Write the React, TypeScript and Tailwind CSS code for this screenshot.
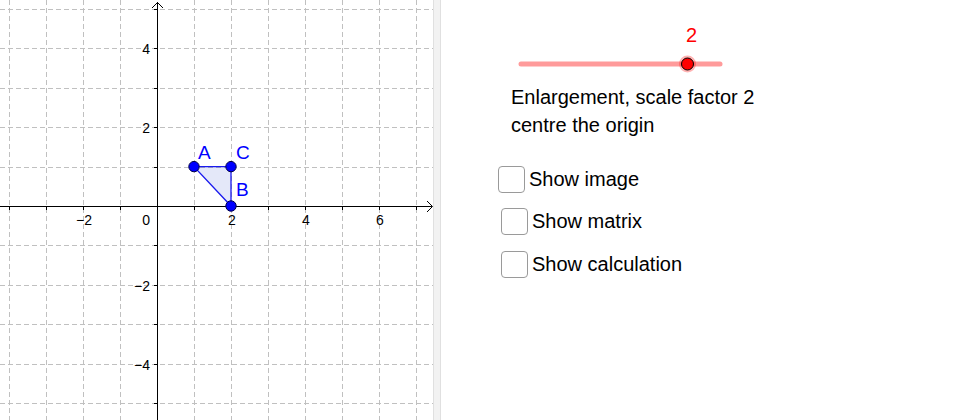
const ORIGIN = { x: 157, y: 206 };
const UX = 37;
const UY = 39.4;

const gridX = [-4, -3, -2, -1, 1, 2, 3, 4, 5, 6, 7].map((k) => ORIGIN.x + k * UX);
const gridY = [-5, -4, -3, -2, -1, 1, 2, 3, 4, 5].map((k) => Math.round(ORIGIN.y + k * UY));

const xLabels = [-2, 2, 4, 6];
const yLabels = [4, 2, -2, -4];

const toPx = (x: number, y: number) => ({ x: ORIGIN.x + x * UX, y: ORIGIN.y - y * UY });

function fmt(n: number) {
  return n < 0 ? `\u2212${Math.abs(n)}` : `${n}`;
}

function Graphics() {
  const A = toPx(1, 1);
  const B = toPx(2, 0);
  const C = toPx(2, 1);

  return (
    <svg width={433} height={420} className="block shrink-0" fontFamily="'Liberation Sans', Arial, sans-serif">
      <g stroke="#c0c0c0" strokeWidth={1} strokeDasharray="5 3">
        {gridX.map((x) => (
          <line key={`gx${x}`} x1={x + 0.5} y1={0} x2={x + 0.5} y2={420} />
        ))}
        {gridY.map((y) => (
          <line key={`gy${y}`} x1={0} y1={y + 0.5} x2={433} y2={y + 0.5} />
        ))}
      </g>

      {/* axes */}
      <g stroke="#000" strokeWidth={1} fill="none">
        <line x1={0} y1={ORIGIN.y + 0.5} x2={432} y2={ORIGIN.y + 0.5} />
        <line x1={ORIGIN.x + 0.5} y1={2} x2={ORIGIN.x + 0.5} y2={420} />
        <polyline points={`427,201 432.5,206.5 427,212`} />
        <polyline points={`152,8 157.5,2.5 163,8`} />
        {gridX.map((x) => (
          <line key={`tx${x}`} x1={x + 0.5} y1={ORIGIN.y} x2={x + 0.5} y2={ORIGIN.y + 4} />
        ))}
        {gridY.map((y) => (
          <line key={`ty${y}`} x1={ORIGIN.x - 3} y1={y + 0.5} x2={ORIGIN.x} y2={y + 0.5} />
        ))}
      </g>

      <g fill="#000" fontSize={14}>
        {xLabels.map((n) => (
          <text key={`lx${n}`} x={ORIGIN.x + n * UX + 1} y={225} textAnchor="middle">
            {fmt(n)}
          </text>
        ))}
        <text x={150} y={225} textAnchor="end">
          0
        </text>
        {yLabels.map((n) => (
          <text key={`ly${n}`} x={150} y={ORIGIN.y - n * UY + 6} textAnchor="end">
            {fmt(n)}
          </text>
        ))}
      </g>

      {/* triangle ABC */}
      <polygon
        points={`${A.x},${A.y} ${C.x},${C.y} ${B.x},${B.y}`}
        fill="#2244cc"
        fillOpacity={0.12}
        stroke="#1a1aee"
        strokeWidth={1.3}
      />
      {[A, B, C].map((p, i) => (
        <circle key={i} cx={p.x} cy={p.y} r={5.2} fill="#0000ff" stroke="#00004a" strokeWidth={1} />
      ))}
      <g fill="#0000ff" fontSize={19}>
        <text x={198} y={159}>A</text>
        <text x={236} y={159}>C</text>
        <text x={236} y={196}>B</text>
      </g>
    </svg>
  );
}

function Slider() {
  return (
    <div className="ml-[69px] w-[220px]">
      <div className="pl-[176px] text-[20px] leading-[23px] text-[#ff0000]">2</div>
      <svg width={220} height={20} className="mt-[7px] block">
        <line x1={11} y1={10} x2={210} y2={10} stroke="#ff9b9b" strokeWidth={5} strokeLinecap="round" />
        <circle cx={177.5} cy={10} r={8.5} fill="#ff0000" fillOpacity={0.3} />
        <circle cx={177.5} cy={10} r={6} fill="#ff0000" stroke="#000" strokeWidth={1} />
      </svg>
    </div>
  );
}

function Check({ label, className }: { label: string; className: string }) {
  return (
    <label className={`flex items-center gap-[4px] ${className}`}>
      <span className="h-[27px] w-[27px] shrink-0 rounded-[4px] border border-[#9a9a9a] bg-white" />
      <span className="text-[20px] leading-[23px] text-black">{label}</span>
    </label>
  );
}

export default function App() {
  return (
    <div className="flex h-[420px] w-[980px] overflow-hidden bg-white font-['Liberation_Sans',Arial,sans-serif]">
      <Graphics />
      <div className="h-full w-[8px] shrink-0 border-x border-[#e0e0e0] bg-[#f2f2f2]" />
      <div className="flex flex-1 flex-col pt-[24px]">
        <Slider />
        <div className="ml-[70px] mt-[9px] text-[20px] leading-[28px] text-black">
          <p>Enlargement, scale factor 2</p>
          <p>centre the origin</p>
        </div>
        <Check label="Show image" className="ml-[57px] mt-[27px]" />
        <Check label="Show matrix" className="ml-[60px] mt-[15px]" />
        <Check label="Show calculation" className="ml-[60px] mt-[16px]" />
      </div>
    </div>
  );
}
